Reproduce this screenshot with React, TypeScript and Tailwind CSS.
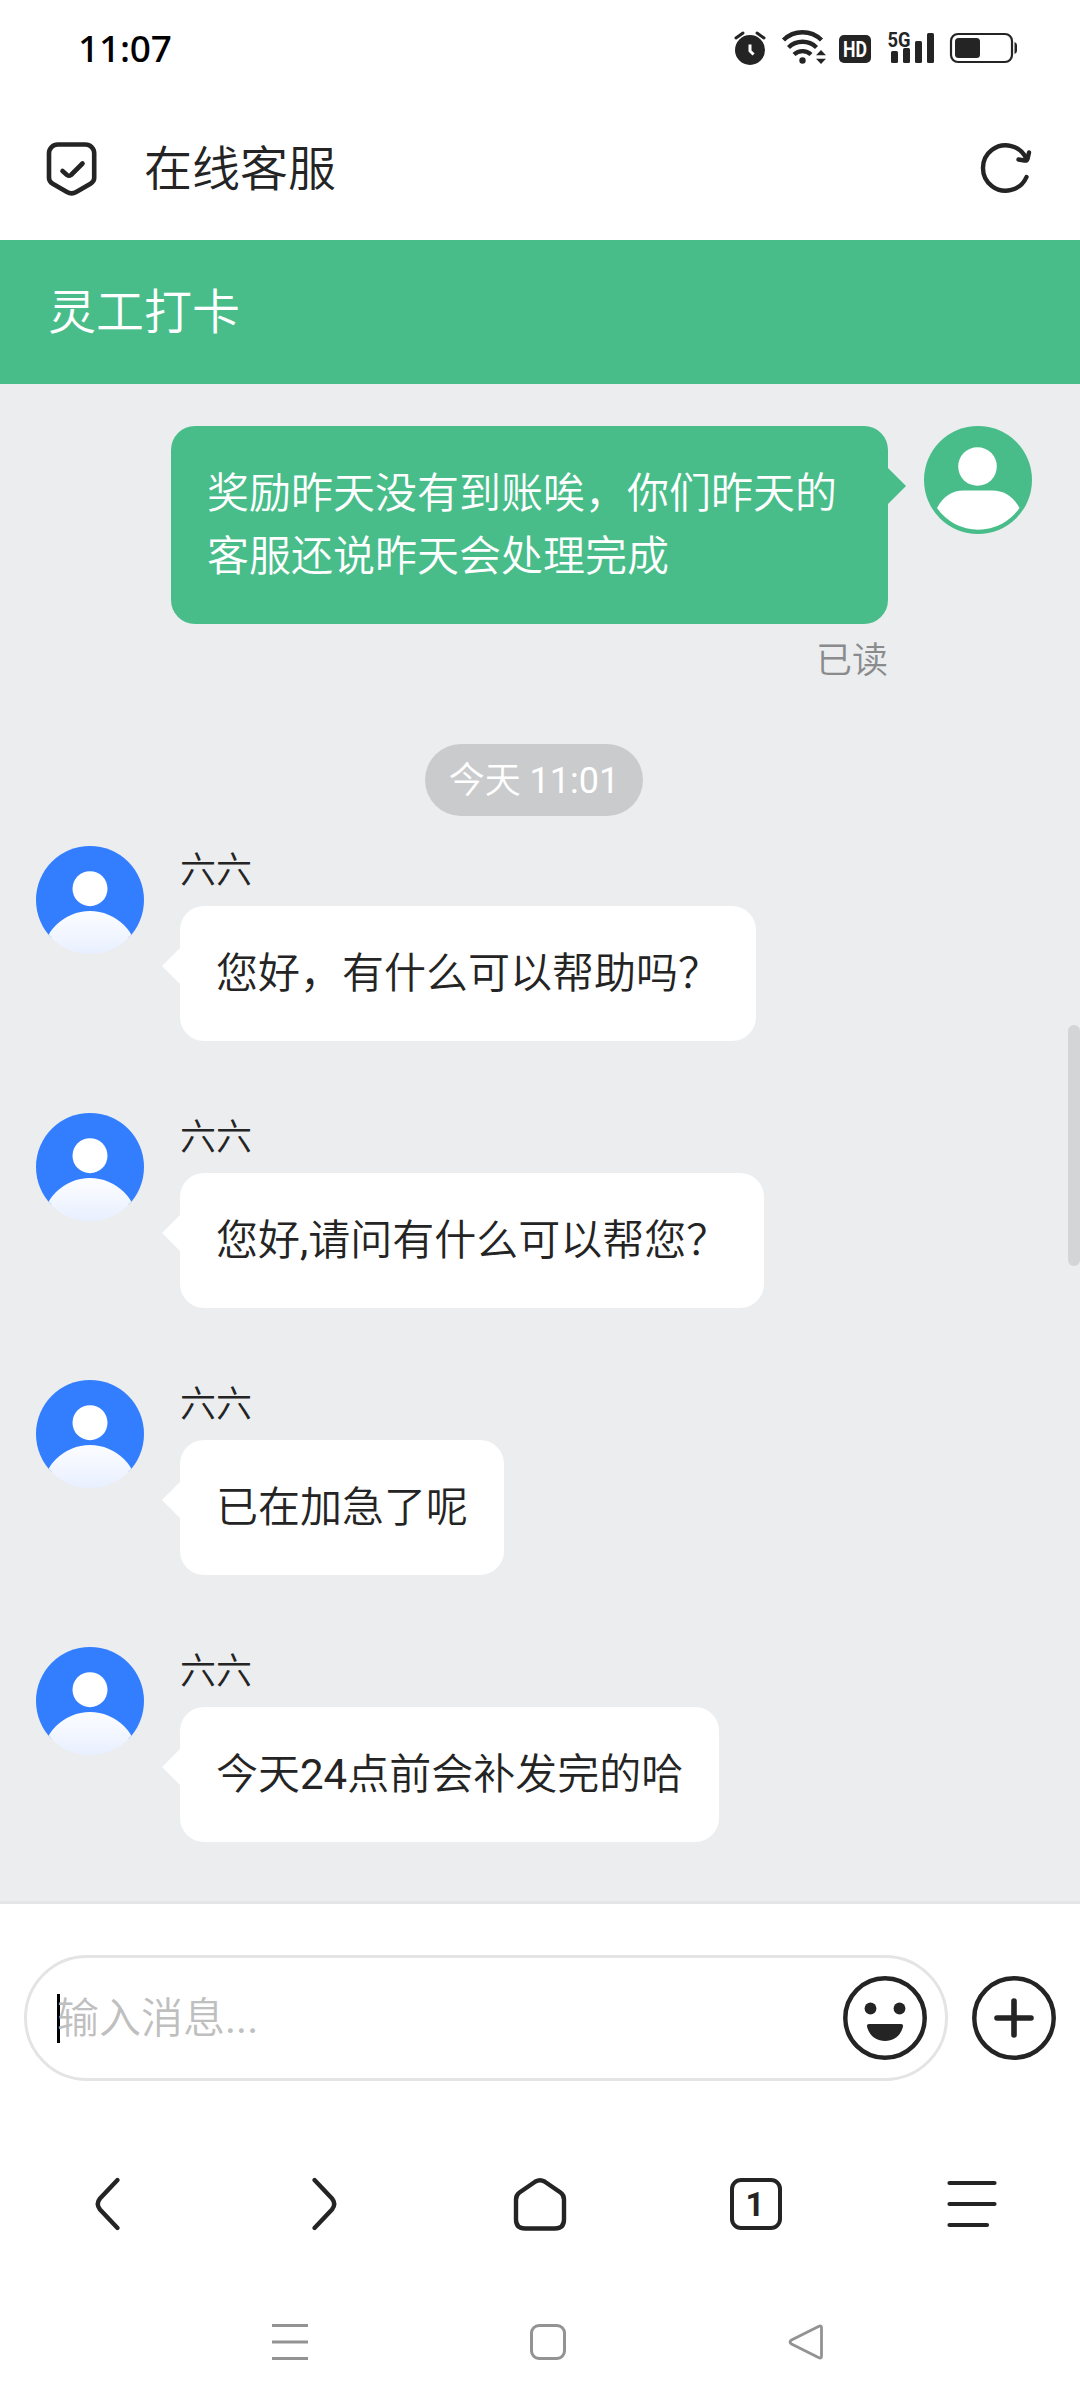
import clsx from "clsx";

type AgentMessage = {
	id: number;
	name: string;
	content: string;
	width: string;
};

const agentMessages: AgentMessage[] = [
	{
		id: 1,
		name: "六六",
		content: "您好，有什么可以帮助吗？",
		width: "w-[576px]",
	},
	{
		id: 2,
		name: "六六",
		content: "您好,请问有什么可以帮您？",
		width: "w-[584px]",
	},
	{ id: 3, name: "六六", content: "已在加急了呢", width: "w-[324px]" },
	{
		id: 4,
		name: "六六",
		content: "今天24点前会补发完的哈",
		width: "w-[539px]",
	},
];

// Latin runs look too thin at the weight used for Chinese text
function MixedText({ text }: { text: string }) {
	const parts = text.split(/([\x21-\x7e]+)/);
	return (
		<>
			{parts.map((part, index) =>
				index % 2 === 1 ? (
					<span key={index} className="font-normal">
						{part}
					</span>
				) : (
					part
				),
			)}
		</>
	);
}

function StatusBar() {
	return (
		<div className="flex h-24 items-center justify-between pr-[62px] pl-[78px] text-[#242424]">
			<span className="font-['Noto_Sans'] text-[37px] leading-[48px] font-medium tracking-[-0.2px] text-black">
				11:07
			</span>
			<svg width="284" height="48" viewBox="734 24 284 48" fill="currentColor">
				{/* Alarm */}
				<circle cx="750" cy="50" r="15" />
				<path
					d="M736 38l7-5M764 38l-7-5"
					stroke="currentColor"
					strokeWidth="3"
					strokeLinecap="round"
				/>
				<path
					d="M750 46v5l2.500 2.500"
					fill="none"
					stroke="#fff"
					strokeWidth="3"
					strokeLinecap="square"
				/>
				{/* Wifi */}
				<g fill="none" stroke="currentColor" strokeWidth="4.400">
					<path d="M783.500 40a27 27 0 0 1 38 0" />
					<path d="M788.500 47.500a20 20 0 0 1 28 0" />
					<path d="M794 54.500a12.500 12.500 0 0 1 17 0" />
				</g>
				<circle cx="802.500" cy="60.500" r="3.200" />
				<path d="M821 50l5 5.200h-10zM821 64l5-5.200h-10z" />
				{/* HD */}
				<rect x="839" y="35" width="32" height="28" rx="5" />
				<text
					x="843"
					y="57"
					fill="#fff"
					fontFamily="Roboto"
					fontWeight="700"
					fontSize="22"
					textLength="24"
					lengthAdjust="spacingAndGlyphs"
				>
					HD
				</text>
				{/* Signal */}
				<text
					x="887.500"
					y="46.500"
					fontFamily="Roboto"
					fontWeight="700"
					fontSize="21"
					textLength="23"
					lengthAdjust="spacingAndGlyphs"
				>
					5G
				</text>
				<rect x="891" y="51" width="7" height="12" rx="1.500" />
				<rect x="903" y="48" width="7" height="15" rx="1.500" />
				<rect x="915" y="41" width="7" height="22" rx="1.500" />
				<rect x="927" y="33" width="7" height="30" rx="1.500" />
				{/* Battery */}
				<rect
					x="951"
					y="34"
					width="61"
					height="28"
					rx="7"
					fill="none"
					stroke="currentColor"
					strokeWidth="2.200"
				/>
				<rect x="955" y="38" width="25" height="20" rx="3.500" />
				<path d="M1014.500 42q2.500 1 2.500 3v6q0 2-2.500 3z" />
			</svg>
		</div>
	);
}

function BrowserHeader() {
	return (
		<header className="flex h-36 items-center pr-12 pl-[46px]">
			<svg
				width="52"
				height="56"
				viewBox="46 140 52 56"
				fill="none"
				stroke="#242424"
				strokeWidth="4.600"
				strokeLinecap="round"
				strokeLinejoin="round"
			>
				<path d="M57.700 144.500h27.800a8.700 8.700 0 0 1 8.700 8.700V178q0 3.500-3.700 5.700L76.200 192q-4.600 2.700-9.200 0l-14.300-8.300q-3.700-2.200-3.700-5.700v-24.800a8.700 8.700 0 0 1 8.700-8.700z" />
				<path d="M62.500 171l4.500 4q2 1.500 4 0L82.500 163.500" />
			</svg>
			<h1 className="ml-[46px] flex-1 pt-[4px] text-[48px] leading-[72px] font-[350] text-[#242424]">
				在线客服
			</h1>
			<svg
				width="54"
				height="54"
				viewBox="978 141 54 54"
				fill="none"
				stroke="#242424"
				strokeWidth="4.400"
				strokeLinecap="round"
				strokeLinejoin="round"
			>
				<path d="M1026.500 177a22.700 22.700 0 1 1 0-18" />
				<path d="M1029 152.500l-1.500 6.500q-.700 2-3 1.500l-6-1" />
			</svg>
		</header>
	);
}

function AgentAvatar() {
	return (
		<svg className="size-[108px] shrink-0 rounded-full" viewBox="0 0 108 108">
			<defs>
				<linearGradient id="shoulders" x1="0" y1="0" x2="0" y2="0.45">
					<stop offset="0" stopColor="#fcfdff" />
					<stop offset="1" stopColor="#e8efff" />
				</linearGradient>
			</defs>
			<rect width="108" height="92" fill="#337eff" />
			<circle cx="54" cy="42.700" r="17.500" fill="#fff" />
			<circle cx="54" cy="113" r="48" fill="url(#shoulders)" />
		</svg>
	);
}

function CustomerAvatar() {
	return (
		<svg className="size-[108px] shrink-0" viewBox="0 0 108 108">
			<circle cx="54" cy="54" r="54" fill="#48bd8a" />
			<circle cx="53.500" cy="40.500" r="19.300" fill="#fff" />
			<path
				d="M13 82Q22 64.500 40 64.500h28Q86 64.500 95.500 82A50 50 0 0 1 13 82z"
				fill="#fff"
			/>
		</svg>
	);
}

function AgentRow({ message }: { message: AgentMessage }) {
	return (
		<div className="flex h-[195px] gap-9">
			<AgentAvatar />
			<div>
				<div className="h-[60px] pt-[1px] text-[36px] leading-[48px] text-[#242424]">
					{message.name}
				</div>
				<div
					className={clsx(
						"relative h-[135px] rounded-[24px] bg-white p-9 text-[42px] leading-[63px] whitespace-nowrap text-[#242424]",
						message.width,
					)}
				>
					<span className="absolute top-[42px] -left-[18px] border-y-[18px] border-r-[18px] border-y-transparent border-r-white" />
					<MixedText text={message.content} />
				</div>
			</div>
		</div>
	);
}

function Conversation() {
	return (
		<main className="relative flex h-[1517px] flex-col bg-[#ebedef] pt-[42px] pr-12 pl-9 font-[350]">
			<div className="flex justify-end gap-9">
				<div>
					<div className="relative h-[198px] w-[717px] rounded-[24px] bg-[#48bd8a] p-9 text-[42px] leading-[63px] text-white">
						奖励昨天没有到账唉，你们昨天的
						<br />
						客服还说昨天会处理完成
						<span className="absolute top-[42px] -right-[18px] border-y-[18px] border-l-[18px] border-y-transparent border-l-[#48bd8a]" />
					</div>
					<div className="mt-[10px] text-right text-[36px] leading-[54px] text-[#8a8b8c]">
						已读
					</div>
				</div>
				<CustomerAvatar />
			</div>

			<div className="mt-[56px] ml-[389px] h-[72px] w-[218px] rounded-full bg-[#cacbcd] pt-[1px] text-center text-[36px] leading-[72px] whitespace-nowrap text-white">
				<MixedText text="今天 11:01" />
			</div>

			<div className="mt-[30px] flex flex-col gap-[72px]">
				{agentMessages.map((message) => (
					<AgentRow key={message.id} message={message} />
				))}
			</div>

			{/* Scroll thumb */}
			<div className="absolute top-[641px] right-0 h-[241px] w-3 rounded-full bg-[#d3d5d7]" />
		</main>
	);
}

function MessageComposer() {
	return (
		<div className="flex h-[231px] items-start justify-between border-t-[3px] border-[#e3e5e7] px-6 pt-[51px]">
			<div className="flex h-[126px] w-[924px] items-center rounded-full border-[3px] border-[#e4e4e4] pr-[18px] pl-[30px]">
				<span className="h-[49px] w-[3px] bg-black" />
				<span className="-ml-[3px] flex-1 text-[42px] leading-[63px] font-[350] text-[#bfbfbf]">
					<MixedText text="输入消息..." />
				</span>
				<svg width="84" height="84" viewBox="0 0 84 84" fill="#242424">
					<circle
						cx="42"
						cy="42"
						r="39.700"
						fill="none"
						stroke="#242424"
						strokeWidth="4.500"
					/>
					<circle cx="27.500" cy="32.500" r="5.900" />
					<circle cx="56.500" cy="32.500" r="5.900" />
					<path d="M26 48h32q2.500 0 2 2.500C58 59 51.500 65 42 65S26 59 24 50.500Q23.500 48 26 48z" />
				</svg>
			</div>
			<svg
				className="mt-[21px]"
				width="84"
				height="84"
				viewBox="0 0 84 84"
				fill="none"
				stroke="#242424"
			>
				<circle cx="42" cy="42" r="39.700" strokeWidth="4.500" />
				<path
					d="M42 25v34M25 42h34"
					strokeWidth="5.600"
					strokeLinecap="round"
				/>
			</svg>
		</div>
	);
}

function BrowserNav() {
	return (
		<nav className="grid h-[142px] grid-cols-5 place-items-center pt-[2px] text-[#242424]">
			<svg
				width="60"
				height="60"
				viewBox="78 2174 60 60"
				fill="none"
				stroke="currentColor"
				strokeWidth="4.400"
				strokeLinecap="round"
			>
				<path d="M117.500 2180L100 2198.500q-4.500 5.500 0 11L117.500 2228" />
			</svg>
			<svg
				width="60"
				height="60"
				viewBox="294 2174 60 60"
				fill="none"
				stroke="currentColor"
				strokeWidth="4.400"
				strokeLinecap="round"
			>
				<path d="M314.500 2180L332 2198.500q4.500 5.500 0 11L314.500 2228" />
			</svg>
			<svg
				width="60"
				height="60"
				viewBox="510 2174 60 60"
				fill="none"
				stroke="currentColor"
				strokeWidth="4.400"
				strokeLinejoin="round"
			>
				<path d="M535.500 2181.500L519.500 2192.500q-3.500 2.500-3.500 7v20q0 9 9 9h30q9 0 9-9v-20q0-4.500-3.500-7L544.500 2181.500q-4.500-2.500-9 0z" />
			</svg>
			<div className="flex size-[52px] items-center justify-center rounded-[11px] border-[4px] border-[#242424] pr-[2px] text-[33px] leading-none font-bold">
				1
			</div>
			<svg
				width="60"
				height="60"
				viewBox="942 2174 60 60"
				fill="none"
				stroke="currentColor"
				strokeWidth="4.200"
				strokeLinecap="round"
			>
				<path d="M949.500 2183h45M949.500 2204h45M949.500 2225h37.500" />
			</svg>
		</nav>
	);
}

function SystemNav() {
	return (
		<div className="flex h-[134px] items-center justify-between pt-[2px] pr-[256px] pl-[272px] text-[#939393]">
			<svg width="36" height="36" stroke="currentColor" strokeWidth="3">
				<path d="M0 1.500h36M0 18h36M0 34.500h36" />
			</svg>
			<span className="size-9 rounded-[9px] border-[3px] border-current" />
			<svg
				width="36"
				height="36"
				fill="none"
				stroke="currentColor"
				strokeWidth="2.800"
				strokeLinejoin="round"
			>
				<path d="M30.500 2.500L3.500 16q-3 2 0 4L30.500 33.500q3 1.500 3-1v-29q0-2.500-3-1z" />
			</svg>
		</div>
	);
}

export default function App() {
	return (
		<div className="flex h-[2408px] w-[1080px] flex-col overflow-hidden bg-white font-['Roboto','Noto_Sans_CJK_SC',sans-serif]">
			<StatusBar />
			<BrowserHeader />
			<div className="flex h-36 items-center bg-[#48bd8a] px-12 pt-[2px] text-[48px] leading-[72px] font-[350] text-white">
				灵工打卡
			</div>
			<Conversation />
			<MessageComposer />
			<BrowserNav />
			<SystemNav />
		</div>
	);
}
